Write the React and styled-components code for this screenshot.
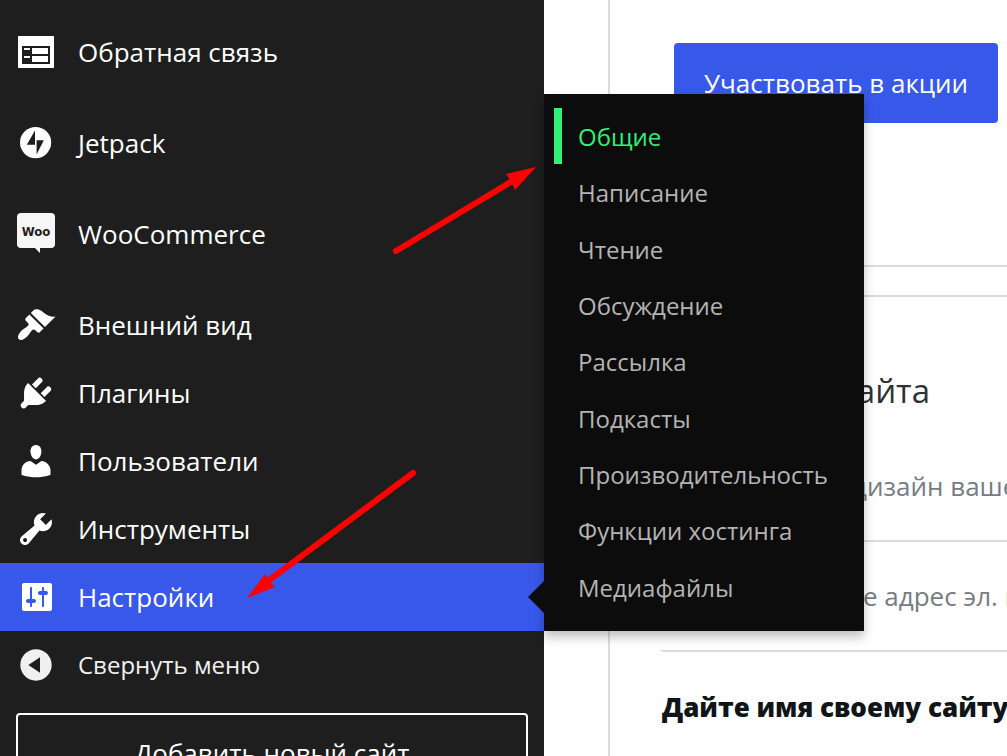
import React from 'react';
import styled, { createGlobalStyle } from 'styled-components';

const GlobalStyle = createGlobalStyle`
  * {
    box-sizing: border-box;
  }
  body {
    margin: 0;
    overflow: hidden;
    background: #fff;
    font-family: 'Open Sans', 'Noto Sans', sans-serif;
  }
  ul {
    list-style: none;
    margin: 0;
    padding: 0;
  }
  a {
    color: inherit;
    text-decoration: none;
  }
  button {
    font-family: inherit;
    cursor: pointer;
  }
`;

const Page = styled.div`
  position: relative;
  display: flex;
  height: 100vh;
  overflow: hidden;
`;

const Sidebar = styled.nav`
  flex: none;
  width: 544px;
  background: #1e1e1e;
  color: #fff;
`;

// the menu is scrolled, its upper part is out of view
const MenuList = styled.ul`
  margin-top: -50px;
`;

const MenuItem = styled.li`
  position: relative;
  margin-top: ${(props) => (props.$spaced ? '23px' : '0')};
  background: ${(props) => (props.$current ? '#3858e9' : 'transparent')};
`;

const MenuLink = styled.a`
  display: flex;
  align-items: center;
  gap: 22px;
  height: 68px;
  padding: 0 16px;
  font-size: 26px;
  line-height: 36px;

  svg {
    flex: none;
  }
`;

const CollapseButton = styled(MenuLink)`
  width: 100%;
  border: none;
  background: none;
  color: #f0f0f1;
  font-size: 24px;
`;

const AddSite = styled.a`
  display: block;
  margin: 14px 16px;
  padding: 20px;
  border: 2px solid #fff;
  border-radius: 4px;
  font-size: 26px;
  line-height: 36px;
  text-align: center;
`;

const Submenu = styled.ul`
  position: absolute;
  z-index: 2;
  left: 100%;
  bottom: 0;
  display: grid;
  grid-template-rows: repeat(9, 1fr);
  width: 320px;
  height: 537px;
  padding: 14px 0 16px;
  background: #0c0c0c;
  box-shadow: 0 6px 10px rgba(0, 0, 0, 0.25);

  &::before {
    content: '';
    position: absolute;
    right: 100%;
    bottom: 18px;
    border: 16px solid transparent;
    border-left: none;
    border-right-color: #0c0c0c;
  }
`;

const SubmenuLink = styled.a`
  display: flex;
  align-items: center;
  height: 100%;
  margin-left: 10px;
  padding: 2px 0 0 16px;
  border-left: 8px solid ${(props) => (props.$current ? '#33f078' : 'transparent')};
  color: ${(props) => (props.$current ? '#33f078' : '#b4b4b4')};
  font-size: 24px;
  line-height: 36px;
`;

const Main = styled.main`
  flex: 1;
  min-width: 0;
  padding-left: 64px;
`;

const Card = styled.section`
  border: 2px solid #dcdcde;
  border-right: none;
  white-space: nowrap;
`;

const PromoCard = styled(Card)`
  height: 267px;
  margin-bottom: 28px;
  padding: 43px 0 0 64px;
  border-top: none;
`;

const PromoButton = styled.button`
  height: 80px;
  padding: 0 30px;
  border: none;
  border-radius: 4px;
  background: #3858e9;
  color: #fff;
  font-size: 26px;
  line-height: 36px;
`;

const SetupCard = styled(Card)`
  padding: 69px 0 0 50px;
`;

const SetupTitle = styled.h2`
  margin: 0 0 16px;
  padding-left: 2px;
  color: #2c3338;
  font-size: 33px;
  font-weight: 400;
  line-height: 50px;
`;

const Task = styled.li`
  display: flex;
  align-items: center;
  gap: 30px;
  height: 110px;
  padding-left: 22px;
  border-bottom: 2px solid #dcdcde;
  border-radius: 0 0 0 4px;
  color: #787c82;
  font-size: 26px;
`;

const ActiveTask = styled(Task)`
  padding-left: 2px;
  border-bottom: none;
  color: #101517;
  font-weight: 800;
`;

const Pointers = styled.svg`
  position: absolute;
  z-index: 3;
  top: 0;
  left: 0;
  pointer-events: none;
`;

const Icon = ({ children }) => (
  <svg width="40" height="40" viewBox="0 0 20 20" fill="#fff" aria-hidden="true">
    {children}
  </svg>
);

const FeedbackIcon = () => (
  <Icon>
    <path
      fillRule="evenodd"
      d="M1.5 2h17c.3 0 .5.2.5.5v15c0 .3-.2.5-.5.5h-17c-.3 0-.5-.2-.5-.5v-15c0-.3.2-.5.5-.5zM3 7v9h14V7z"
    />
    <path d="M4 8h3v1H4zM8 8h8v3H8zM4 12h3v1H4zM8 12h8v3H8z" />
  </Icon>
);

const JetpackIcon = () => (
  <Icon>
    <circle cx="9.8" cy="9.8" r="7.8" />
    <path fill="#1e1e1e" d="M9.5 3.7v7.2H5.4zM10.3 15.8V8.6h3.6z" />
  </Icon>
);

const WooIcon = () => (
  <svg width="40" height="42" viewBox="0 0 40 42" aria-hidden="true">
    <path
      fill="#f6f6f6"
      d="M5 0h30a4 4 0 0 1 4 4v27a4 4 0 0 1-4 4H24v5l-5-5H5a4 4 0 0 1-4-4V4a4 4 0 0 1 4-4z"
    />
    <text
      x="20"
      y="23"
      textAnchor="middle"
      fill="#1e1e1e"
      fontFamily="DejaVu Sans Condensed, DejaVu Sans, sans-serif"
      fontSize="13"
      fontWeight="700"
    >
      Woo
    </text>
  </svg>
);

const AppearanceIcon = () => (
  <Icon>
    <path d="M14.48 11.06L7.41 3.99l1.5-1.5c.5-.56 2.3-.47 3.51.32 1.21.8 1.43 1.28 2.91 2.1 1.18.64 2.45 1.26 4.45.85zm-.71.71L6.7 4.7 4.93 6.47c-.39.39-.39 1.02 0 1.41l1.06 1.06c.39.39.39 1.03 0 1.42-.6.6-1.43 1.11-2.21 1.69-.35.26-.7.53-1.01.84C1.43 14.23.4 16.08 1.4 17.07c.99 1 2.84-.03 4.18-1.36.31-.31.58-.66.85-1.02.57-.78 1.08-1.61 1.69-2.21.39-.39 1.02-.39 1.41 0l1.06 1.06c.39.39 1.02.39 1.41 0z" />
  </Icon>
);

const PluginsIcon = () => (
  <Icon>
    <path d="M13.11 4.36L9.87 7.6 8 5.73l3.24-3.24c.35-.34 1.05-.2 1.56.32.52.51.66 1.21.31 1.55zm-8 1.77l.91-1.12 9.01 9.01-1.19.84c-.71.71-2.63 1.16-3.82 1.16H6.14L4.9 17.26c-.59.59-1.54.59-2.12 0-.59-.58-.59-1.53 0-2.12l1.24-1.24v-3.88c0-1.13.4-3.19 1.09-3.89zm7.26 3.97l3.24-3.24c.34-.35 1.04-.21 1.55.31.52.51.66 1.21.31 1.55l-3.24 3.25z" />
  </Icon>
);

const UsersIcon = () => (
  <Icon>
    <path d="M10 9.25c-2.27 0-2.73-3.44-2.73-3.44C7 4.02 7.82 2 9.97 2c2.16 0 2.98 2.02 2.71 3.81 0 0-.41 3.44-2.68 3.44zm0 2.57L12.72 10c2.39 0 4.52 2.33 4.52 4.53v2.49s-3.65 1.13-7.24 1.13c-3.65 0-7.24-1.13-7.24-1.13v-2.49c0-2.25 1.94-4.48 4.47-4.48z" />
  </Icon>
);

const ToolsIcon = () => (
  <Icon>
    <path d="M16.68 9.77c-1.34 1.34-3.3 1.67-4.95.99l-5.41 6.52c-.99.99-2.59.99-3.58 0s-.99-2.59 0-3.57l6.52-5.42c-.68-1.65-.35-3.61.99-4.95 1.28-1.28 3.12-1.62 4.72-1.06l-2.89 2.89 2.82 2.82 2.86-2.87c.53 1.58.18 3.39-1.08 4.65zM3.81 16.21c.4.39 1.04.39 1.43 0 .4-.4.4-1.04 0-1.43-.39-.4-1.03-.4-1.43 0-.39.39-.39 1.03 0 1.43z" />
  </Icon>
);

const SettingsIcon = () => (
  <Icon>
    <path d="M18 16V4c0-.55-.45-1-1-1H4c-.55 0-1 .45-1 1v12c0 .55.45 1 1 1h13c.55 0 1-.45 1-1zM8 11h1c.55 0 1 .45 1 1s-.45 1-1 1H8v1.5c0 .28-.22.5-.5.5s-.5-.22-.5-.5V13H6c-.55 0-1-.45-1-1s.45-1 1-1h1V5.5c0-.28.22-.5.5-.5s.5.22.5.5V11zm5-2h-1c-.55 0-1-.45-1-1s.45-1 1-1h1V5.5c0-.28.22-.5.5-.5s.5.22.5.5V7h1c.55 0 1 .45 1 1s-.45 1-1 1h-1v5.5c0 .28-.22.5-.5.5s-.5-.22-.5-.5V9z" />
  </Icon>
);

const CollapseIcon = () => (
  <Icon>
    <path
      fill="#f0f0f1"
      d="M10 2.16c4.33 0 7.84 3.51 7.84 7.84s-3.51 7.84-7.84 7.84S2.16 14.33 2.16 10 5.71 2.16 10 2.16zm2 11.72V6.12L6.18 9.97z"
    />
  </Icon>
);

const CommentsIcon = () => (
  <Icon>
    <path d="M5 2h9c1.1 0 2 .9 2 2v7c0 1.1-.9 2-2 2h-2l-5 5v-5H5c-1.1 0-2-.9-2-2V4c0-1.1.9-2 2-2z" />
  </Icon>
);

const CheckIcon = () => (
  <svg width="30" height="30" viewBox="0 0 24 24" fill="none" stroke="#787c82" strokeWidth="2" aria-hidden="true">
    <path d="M5 12l5 5L19 7" />
  </svg>
);

const menu = [
  { id: 1, text: 'Комментарии', icon: CommentsIcon },
  { id: 2, text: 'Обратная связь', icon: FeedbackIcon },
  { id: 3, text: 'Jetpack', icon: JetpackIcon, spaced: true },
  { id: 4, text: 'WooCommerce', icon: WooIcon, spaced: true },
  { id: 5, text: 'Внешний вид', icon: AppearanceIcon, spaced: true },
  { id: 6, text: 'Плагины', icon: PluginsIcon },
  { id: 7, text: 'Пользователи', icon: UsersIcon },
  { id: 8, text: 'Инструменты', icon: ToolsIcon },
  { id: 9, text: 'Настройки', icon: SettingsIcon, current: true },
];

const settings = [
  'Общие',
  'Написание',
  'Чтение',
  'Обсуждение',
  'Рассылка',
  'Подкасты',
  'Производительность',
  'Функции хостинга',
  'Медиафайлы',
];

const SettingsSubmenu = () => (
  <Submenu>
    {settings.map((text, i) => (
      <li key={text}>
        <SubmenuLink href="#" $current={i === 0}>
          {text}
        </SubmenuLink>
      </li>
    ))}
  </Submenu>
);

const App = () => {
  return (
    <Page>
      <GlobalStyle />
      <Sidebar>
        <MenuList>
          {menu.map(({ id, text, icon: ItemIcon, spaced, current }) => (
            <MenuItem key={id} $spaced={spaced} $current={current}>
              <MenuLink href="#">
                <ItemIcon />
                {text}
              </MenuLink>
              {current && <SettingsSubmenu />}
            </MenuItem>
          ))}
          <MenuItem>
            <CollapseButton as="button" type="button">
              <CollapseIcon />
              Свернуть меню
            </CollapseButton>
          </MenuItem>
        </MenuList>
        <AddSite href="#">Добавить новый сайт</AddSite>
      </Sidebar>
      <Main>
        <PromoCard>
          <PromoButton type="button">Участвовать в акции</PromoButton>
        </PromoCard>
        <SetupCard>
          <SetupTitle>Настройка сайта</SetupTitle>
          <ul>
            <Task>
              <CheckIcon />
              Настройте дизайн вашего сайта
            </Task>
            <Task>
              <CheckIcon />
              Подтвердите адрес эл. почты
            </Task>
            <ActiveTask>Дайте имя своему сайту</ActiveTask>
          </ul>
        </SetupCard>
      </Main>
      <Pointers width="544" height="640" fill="#f00" stroke="#f00" aria-hidden="true">
        <path d="M396 251L514 180M413 473L268 581" strokeWidth="6" strokeLinecap="round" />
        <path stroke="none" d="M536 167l-30 7 5 7 4 9zM247 598l18-24 4 7 6 6z" />
      </Pointers>
    </Page>
  );
};

export default App;
